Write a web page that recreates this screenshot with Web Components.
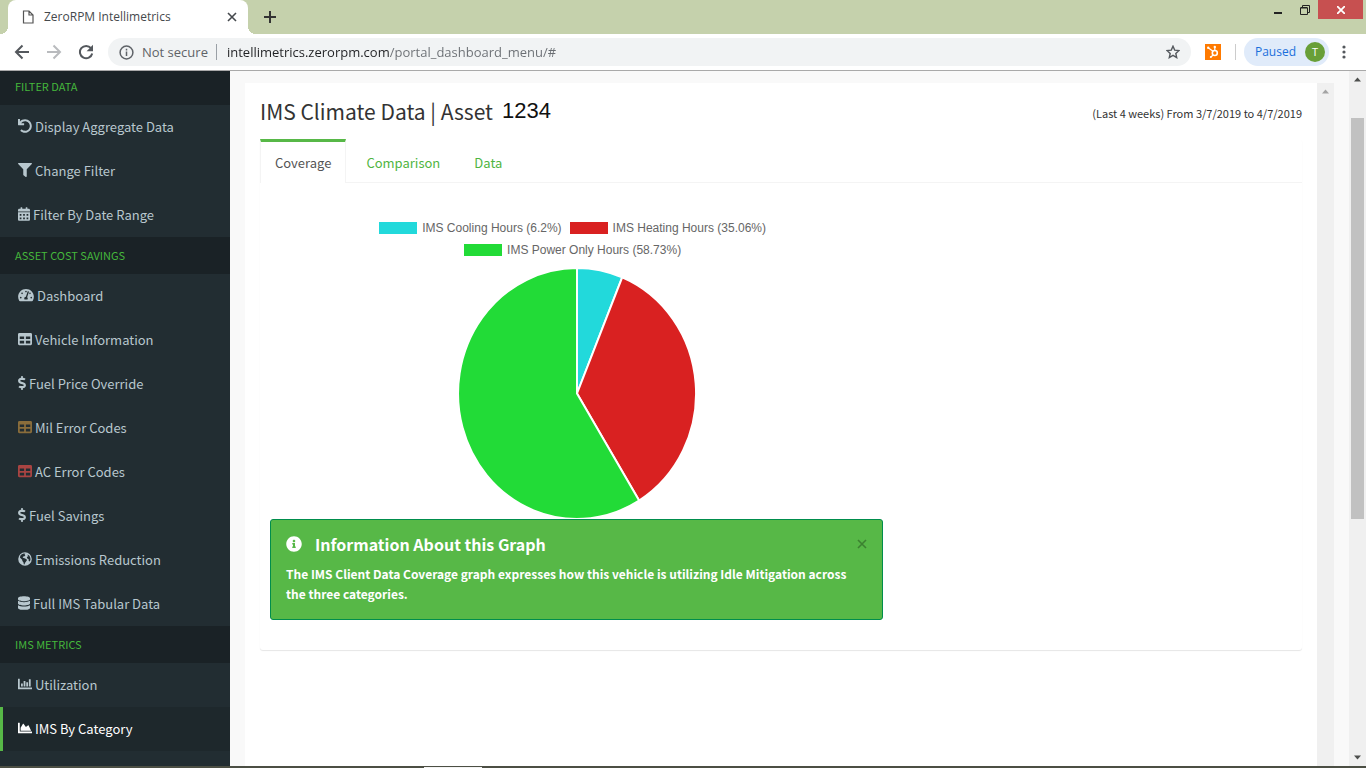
<!DOCTYPE html>
<html lang="en">
<head>
<meta charset="utf-8">
<title>ZeroRPM Intellimetrics</title>
<style>
  html, body { margin: 0; height: 100%; }
  body {
    --green: #57b847;
    --ui: "Open Sans", "Noto Sans", sans-serif;
    --text: "Noto Sans CJK SC", "Noto Sans", sans-serif;
    overflow: hidden;
    font-family: var(--text);
    font-size: 13px;
    color: #333;
  }
</style>
</head>
<body>
<app-window>
  <tab-strip slot="tabs">ZeroRPM Intellimetrics</tab-strip>
  <address-bar slot="toolbar"></address-bar>
  <side-nav slot="nav">
    <nav-group heading="Filter Data">
      <nav-item icon="undo">Display Aggregate Data</nav-item>
      <nav-item icon="filter">Change Filter</nav-item>
      <nav-item icon="calendar">Filter By Date Range</nav-item>
    </nav-group>
    <nav-group heading="Asset Cost Savings">
      <nav-item icon="gauge">Dashboard</nav-item>
      <nav-item icon="table">Vehicle Information</nav-item>
      <nav-item icon="dollar">Fuel Price Override</nav-item>
      <nav-item icon="table" tint="#8a6d3b">Mil Error Codes</nav-item>
      <nav-item icon="table" tint="#a94442">AC Error Codes</nav-item>
      <nav-item icon="dollar">Fuel Savings</nav-item>
      <nav-item icon="globe">Emissions Reduction</nav-item>
      <nav-item icon="database">Full IMS Tabular Data</nav-item>
    </nav-group>
    <nav-group heading="IMS Metrics">
      <nav-item icon="bars">Utilization</nav-item>
      <nav-item icon="area" active>IMS By Category</nav-item>
    </nav-group>
  </side-nav>
  <asset-report>
    <report-title slot="title" asset="1234" period="(Last 4 weeks) From 3/7/2019 to 4/7/2019">IMS Climate Data | Asset</report-title>
    <tab-panel>
      <pie-chart></pie-chart>
      <info-alert heading="Information About this Graph">The IMS Client Data Coverage graph expresses how this vehicle is utilizing Idle Mitigation across the three categories.</info-alert>
    </tab-panel>
  </asset-report>
</app-window>

<script>
const ICONS = {
  undo: [512, '<path d="M212.333 224.333H12c-6.627 0-12-5.373-12-12V12C0 5.373 5.373 0 12 0h48c6.627 0 12 5.373 12 12v78.112C117.773 39.279 184.26 7.47 258.175 8.007c136.906.994 246.448 111.623 246.157 248.532C504.041 393.258 393.12 504 256.333 504c-64.089 0-122.496-24.313-166.51-64.215-5.099-4.622-5.334-12.554-.467-17.42l33.967-33.967c4.474-4.474 11.662-4.717 16.401-.525C170.76 415.336 211.58 432 256.333 432c97.268 0 176-78.716 176-176 0-97.267-78.716-176-176-176-58.496 0-110.28 28.476-142.274 72.333h98.274c6.627 0 12 5.373 12 12v48c0 6.627-5.373 12-12 12z"/>'],
  filter: [512, '<path d="M487.976 0H24.028C2.71 0-8.047 25.866 7.058 40.971L192 225.941V432c0 7.831 3.821 15.17 10.237 19.662l80 55.98C298.02 518.69 320 507.493 320 487.98V225.941l184.947-184.97C520.021 25.896 509.338 0 487.976 0z"/>'],
  calendar: [448, '<path fill-rule="evenodd" d="M0 464c0 26.5 21.5 48 48 48h352c26.5 0 48-21.5 48-48V192H0v272zM64 256h64v64H64zM192 256h64v64h-64zM320 256h64v64h-64zM64 384h64v64H64zM192 384h64v64h-64zM320 384h64v64h-64zM400 64h-48V16c0-8.8-7.2-16-16-16h-32c-8.800 0-16 7.200-16 16v48H160V16c0-8.800-7.200-16-16-16h-32c-8.800 0-16 7.200-16 16v48H48C21.500 64 0 85.500 0 112v48h448v-48c0-26.500-21.500-48-48-48z"/>'],
  gauge: [576, '<path d="M288 32C128.940 32 0 160.940 0 320c0 52.800 14.250 102.260 39.060 144.800 5.610 9.620 16.300 15.200 27.440 15.200h443c11.140 0 21.830-5.580 27.440-15.200C561.750 422.260 576 372.800 576 320c0-159.060-128.940-288-288-288zm0 64c14.710 0 26.580 10.130 30.320 23.650-1.110 2.260-2.640 4.230-3.450 6.670l-9.220 27.670c-5.130 3.490-10.970 6.010-17.640 6.010-17.670 0-32-14.330-32-32S270.330 96 288 96zM96 384c-17.670 0-32-14.330-32-32s14.330-32 32-32 32 14.330 32 32-14.330 32-32 32zm48-160c-17.670 0-32-14.330-32-32s14.330-32 32-32 32 14.330 32 32-14.330 32-32 32zm246.770-72.410l-61.330 184C343.130 347.330 352 364.540 352 384c0 11.720-3.380 22.550-8.880 32H232.880c-5.500-9.450-8.880-20.280-8.880-32 0-33.940 26.500-61.430 59.900-63.590l61.340-184.010c4.170-12.560 17.730-19.450 30.360-15.170 12.570 4.190 19.350 17.790 15.170 30.360zm14.660 57.200l15.520-46.550c3.470-1.290 7.130-2.230 11.050-2.230 17.670 0 32 14.330 32 32s-14.330 32-32 32c-11.380-.010-20.890-6.280-26.570-15.220zM480 384c-17.670 0-32-14.330-32-32s14.330-32 32-32 32 14.330 32 32-14.330 32-32 32z"/>'],
  table: [512, '<path fill-rule="evenodd" d="M464 32H48C21.490 32 0 53.490 0 80v352c0 26.510 21.490 48 48 48h416c26.510 0 48-21.490 48-48V80c0-26.510-21.490-48-48-48zM224 416H64v-96h160v96zm0-160H64v-96h160v96zm224 160H288v-96h160v96zm0-160H288v-96h160v96z"/>'],
  dollar: [288, '<path d="M209.200 233.400l-108-31.600C88.700 198.200 80 186.500 80 173.500c0-16.300 13.200-29.500 29.500-29.500h66.300c12.200 0 24.200 3.700 34.200 10.500 6.100 4.100 14.300 3.100 19.500-2l34.800-34c7.100-6.900 6.100-18.400-1.800-24.500C238 74.800 207.400 64.100 176 64V16c0-8.800-7.200-16-16-16h-32c-8.800 0-16 7.200-16 16v48h-2.500C45.800 64-5.400 118.700.5 183.600c4.200 46.100 39.400 83.600 83.800 96.600l102.500 30c12.500 3.700 21.200 15.300 21.200 28.300 0 16.300-13.200 29.500-29.500 29.500h-66.300C100 368 88 364.300 78 357.500c-6.100-4.100-14.300-3.100-19.500 2l-34.800 34c-7.100 6.900-6.100 18.400 1.800 24.500 24.500 19.200 55.100 29.900 86.500 30v48c0 8.800 7.200 16 16 16h32c8.800 0 16-7.200 16-16v-48.200c46.600-.9 90.300-28.600 105.700-72.700 21.500-61.600-14.600-124.800-72.500-141.700z"/>'],
  globe: [512, '<path fill-rule="evenodd" d="M256 8a248 248 0 1 0 0 496 248 248 0 0 0 0-496zM90 130l50-46 70-28 60 8-30 36 30 22-34 34-44 12-22 40 44 8 44 20 54 28 16 38-34 44-34 48-24 62-24-8-10-66-42-50-8-48-38-34-44-48zM346 90l60 40 36 54 16 80-16 64-30 22-24-36 4-46-40-20-28-34 10-44 44-16-26-32z"/>'],
  database: [448, '<path d="M448 73.143v45.714C448 159.143 347.667 192 224 192S0 159.143 0 118.857V73.143C0 32.857 100.333 0 224 0s224 32.857 224 73.143zM448 176v102.857C448 319.143 347.667 352 224 352S0 319.143 0 278.857V176c48.125 33.143 136.208 48.572 224 48.572S399.874 209.143 448 176zm0 160v102.857C448 479.143 347.667 512 224 512S0 479.143 0 438.857V336c48.125 33.143 136.208 48.572 224 48.572S399.874 369.143 448 336z"/>'],
  bars: [512, '<path d="M500 384c7 0 12 5 12 12v40c0 7-5 12-12 12H12c-7 0-12-5-12-12V76c0-7 5-12 12-12h40c7 0 12 5 12 12v308zM110 240h66v110h-66zM206 144h66v206h-66zM302 192h66v158h-66zM398 80h66v270h-66z"/>'],
  area: [512, '<path d="M500 384c6.600 0 12 5.400 12 12v40c0 6.600-5.400 12-12 12H12c-6.600 0-12-5.400-12-12V76c0-6.600 5.400-12 12-12h40c6.600 0 12 5.400 12 12v308h436zM372.700 159.500L288 216l-85.300-113.700c-5.100-6.800-15.500-6.300-19.900 1L96 248v104h384l-89.900-187.800c-3.200-6.500-11.400-8.700-17.400-4.700z"/>'],
  info: [512, '<path d="M256 8C119.043 8 8 119.083 8 256c0 136.997 111.043 248 248 248s248-111.003 248-248C504 119.083 392.957 8 256 8zm0 110c23.196 0 42 18.804 42 42s-18.804 42-42 42-42-18.804-42-42 18.804-42 42-42zm56 254c0 6.627-5.373 12-12 12h-88c-6.627 0-12-5.373-12-12v-24c0-6.627 5.373-12 12-12h12v-64h-12c-6.627 0-12-5.373-12-12v-24c0-6.627 5.373-12 12-12h64c6.627 0 12 5.373 12 12v100h12c6.627 0 12 5.373 12 12v24z"/>']
};

function icon(name, size) {
  const [w, body] = ICONS[name];
  return `<svg aria-hidden="true" viewBox="0 0 ${w} 512" width="${Math.round(w * size / 512)}" height="${size}" fill="currentColor">${body}</svg>`;
}

function define(name, render) {
  customElements.define(name, class extends HTMLElement {
    constructor() { super(); this.attachShadow({ mode: 'open' }); }
    connectedCallback() { this.shadowRoot.innerHTML = render(this); }
  });
}

const RESET = `
  *, *::before, *::after { box-sizing: border-box; }
  button, input { margin: 0; padding: 0; border: 0; background: none; font: inherit; color: inherit; }
  svg { display: block; flex: none; }
`;

define('app-window', () => `
  <style>${RESET}
    :host { display: flex; flex-direction: column; height: 100vh; background: #f9f9f9; }
    .body { display: flex; flex: 1; min-height: 0; border-top: 1px solid #a9a9a9; }
    main { flex: 1; min-width: 0; display: flex; padding: 12px 15px 0; }
    .taskbar { height: 2px; background: #4c4f44; padding: 1px 0 0 424px; }
    .taskbar span { display: block; width: 58px; height: 1px; background: #f4f4f4; }
  </style>
  <slot name="tabs"></slot>
  <slot name="toolbar"></slot>
  <div class="body">
    <slot name="nav"></slot>
    <main><slot></slot></main>
    <scroll-rail thumb></scroll-rail>
  </div>
  <div class="taskbar"><span></span></div>`);

define('tab-strip', () => `
  <style>${RESET}
    :host { display: flex; height: 34px; background: #c5d1ac; font: 12px/34px var(--ui); color: #45494d; padding-left: 8px; }
    .tab { position: relative; display: flex; align-items: center; width: 240px; padding: 0 11px 0 14px; background: #fff; border-radius: 8px 8px 0 0; }
    .tab::before, .tab::after { content: ""; position: absolute; bottom: 0; width: 8px; height: 8px; }
    .tab::before { left: -8px; background: radial-gradient(circle at 0 0, #c5d1ac 8px, #fff 8px); }
    .tab::after { right: -8px; background: radial-gradient(circle at 100% 0, #c5d1ac 8px, #fff 8px); }
    .name { flex: 1; padding-left: 10px; white-space: nowrap; }
    .add { width: 28px; margin-left: 8px; display: grid; place-items: center; }
    .window { display: flex; margin-left: auto; padding-right: 3px; }
    .window button { width: 27px; height: 19px; display: grid; place-items: center; }
    .window .close { width: 45px; background: #c75050; color: #fff; }
  </style>
  <div class="tab">
    <svg width="12" height="14" viewBox="0 0 12 14" fill="none" stroke="#555" stroke-width="1.200"><path d="M1.500 1h5.500l4 4v8h-9.500zM7 1v4h4"/></svg>
    <span class="name"><slot></slot></span>
    <button aria-label="Close tab"><svg width="10" height="10" viewBox="0 0 10 10" stroke="#45494d" stroke-width="1.600"><path d="M1 1l8 8M9 1l-8 8"/></svg></button>
  </div>
  <button class="add" aria-label="New tab"><svg width="12" height="12" viewBox="0 0 12 12" stroke="#333" stroke-width="2"><path d="M6 0v12M0 6h12"/></svg></button>
  <div class="window">
    <button aria-label="Minimize"><svg width="8" height="10" viewBox="0 0 8 10"><path d="M0 7h8v2H0z" fill="#222"/></svg></button>
    <button aria-label="Restore"><svg width="10" height="10" viewBox="0 0 10 10" fill="none" stroke="#222"><path d="M.5 3h7v6.500h-7zM.5 2.500h7M2.500 2V.5h7v7H8"/></svg></button>
    <button class="close" aria-label="Close"><svg width="8" height="8" viewBox="0 0 8 8" stroke="#fff" stroke-width="1.800"><path d="M0 0l8 8M8 0L0 8"/></svg></button>
  </div>`);

define('address-bar', () => `
  <style>${RESET}
    :host { display: flex; align-items: center; height: 36px; padding: 0 17px 0 14px; background: #fff; font: 13px/28px var(--ui); color: #5f6368; }
    .nav { display: flex; gap: 16px; margin-right: 14px; }
    .box { display: flex; align-items: center; flex: 1; height: 28px; padding: 0 11px; border-radius: 14px; background: #f1f3f4; }
    label { padding: 0 8px; white-space: nowrap; }
    .rule { width: 1px; height: 16px; background: #9aa0a6; }
    input { flex: 1; min-width: 0; height: 28px; margin-left: 10px; outline: 0; color: #202124;
      -webkit-text-fill-color: transparent;
      background: linear-gradient(90deg, #202124 163px, #6a6e73 163px); -webkit-background-clip: text; background-clip: text; }
    .hub { margin: 0 14px; }
    .split { width: 1px; height: 16px; background: #ccc; }
    .profile { display: flex; align-items: center; gap: 9px; height: 28px; margin-left: 8px; padding: 0 4px 0 11px; border-radius: 14px; background: #e0ebfa; color: #1a6fdc; font-size: 12px; }
    .avatar { width: 20px; border-radius: 50%; background: #689f38; color: #fff; font-size: 11px; line-height: 20px; text-align: center; }
    .menu { margin-left: 10px; }
  </style>
  <div class="nav">
    <button aria-label="Back"><svg width="16" height="16" viewBox="0 0 16 16" fill="none" stroke="#54585d" stroke-width="2"><path d="M15 8H2.500M8.500 1.500L2 8l6.500 6.500"/></svg></button>
    <button aria-label="Forward"><svg width="16" height="16" viewBox="0 0 16 16" fill="none" stroke="#b9bbbe" stroke-width="2"><path d="M1 8h12.500M7.500 1.500L14 8l-6.500 6.500"/></svg></button>
    <button aria-label="Reload"><svg width="16" height="16" viewBox="0 0 16 16"><path d="M13 4.200A6.200 6.200 0 1 0 14.200 9.500" fill="none" stroke="#54585d" stroke-width="2"/><path d="M15 .8v6.400H8.600z" fill="#54585d"/></svg></button>
  </div>
  <div class="box">
    <svg width="15" height="15" viewBox="0 0 15 15" fill="none" stroke="#5f6368" stroke-width="1.500"><circle cx="7.500" cy="7.500" r="6.400"/><path d="M7.500 6.600v4.400M7.500 3.800v1.700"/></svg>
    <label for="url">Not secure</label>
    <span class="rule"></span>
    <input id="url" type="text" spellcheck="false" value="intellimetrics.zerorpm.com/portal_dashboard_menu/#">
    <button aria-label="Bookmark this page"><svg width="14" height="14" viewBox="0 0 14 14" fill="none" stroke="#54585d" stroke-width="1.400"><path d="M7 1.200l1.700 3.900 4.300.4-3.200 2.900.9 4.200L7 10.400l-3.700 2.200.9-4.200L1 5.500l4.300-.4z"/></svg></button>
  </div>
  <button class="hub" aria-label="HubSpot extension"><svg width="16" height="16" viewBox="0 0 16 16"><path fill="#ff7a00" d="M0 0h16v16H0z"/><g fill="none" stroke="#fff"><circle cx="9.800" cy="9" r="2.500" stroke-width="1.600"/><path d="M9.800 6.500V3.500M8 7.300L3.500 4M8 11l-2 2" stroke-width="1.200"/></g><g fill="#fff"><circle cx="9.800" cy="3" r="1.200"/><circle cx="3.200" cy="3.800" r="1.200"/><circle cx="5.800" cy="13" r="1"/></g></svg></button>
  <span class="split"></span>
  <button class="profile">Paused <span class="avatar">T</span></button>
  <button class="menu" aria-label="Menu"><svg width="10" height="14" viewBox="0 0 10 14" fill="#54585d"><circle cx="5" cy="2" r="1.600"/><circle cx="5" cy="7" r="1.600"/><circle cx="5" cy="12" r="1.600"/></svg></button>`);

define('side-nav', () => `
  <style>
    :host { display: block; flex: none; width: 230px; overflow: hidden; background: #222d32; }
    nav { margin-top: -3px; }
  </style>
  <nav><slot></slot></nav>`);

define('nav-group', el => `
  <style>
    :host { display: block; }
    h2 { margin: 0; padding: 0 15px; background: #1a2226; color: #45b73c; font-weight: 400; font-size: 11px; line-height: 37px; text-transform: uppercase; }
  </style>
  <h2>${el.getAttribute('heading')}</h2>
  <slot></slot>`);

define('nav-item', el => `
  <style>${RESET}
    :host { display: block; color: #b8c7ce; }
    a { display: flex; align-items: center; gap: 3px; height: 44px; padding: 0 15px 2px; border-left: 3px solid transparent; color: inherit; text-decoration: none; white-space: nowrap; }
    :host([active]) { color: #fff; }
    :host([active]) a { background: #1e282c; border-color: var(--green); }
    .icon { color: ${el.getAttribute('tint') || 'inherit'}; }
  </style>
  <a href="#"><span class="icon">${icon(el.getAttribute('icon'), 14)}</span><span><slot></slot></span></a>`);

define('scroll-rail', el => `
  <style>${RESET}
    :host { display: flex; flex: none; flex-direction: column; align-items: center; width: 17px; padding: 6px 0; background: #f0f0f0; color: #4d4f4d; }
    :host([idle]) { color: #a3a3a3; }
    .track { flex: 1; width: 13px; padding: 36px 0 0; }
    .thumb { height: 63%; background: #c1c1c1; }
  </style>
  <svg width="7" height="5" viewBox="0 0 7 5"><path d="M0 4.500L3.500 .5 7 4.500z" fill="currentColor"/></svg>
  <div class="track">${el.hasAttribute('thumb') ? '<div class="thumb"></div>' : ''}</div>
  ${el.hasAttribute('thumb') ? '<svg width="7" height="5" viewBox="0 0 7 5"><path d="M0 .5L3.500 4.500 7 .5z" fill="currentColor"/></svg>' : ''}`);

define('asset-report', () => `
  <style>
    :host { display: flex; flex: 1; min-width: 0; background: #fff; }
    section { flex: 1; min-width: 0; padding: 13px 15px 0; }
  </style>
  <section><slot name="title"></slot><slot></slot></section>
  <scroll-rail idle></scroll-rail>`);

define('report-title', el => `
  <style>
    :host { display: flex; align-items: center; justify-content: space-between; height: 30px; margin-bottom: 13px; }
    h1 { display: flex; gap: 9px; margin: 0; font-weight: 400; font-size: 21px; line-height: 30px; }
    b { font: 22px/30px "Liberation Sans", sans-serif; color: #111; }
    small { font-size: 11px; line-height: 16px; padding-top: 4px; }
  </style>
  <h1><span><slot></slot></span> <b>${el.getAttribute('asset')}</b></h1>
  <small>${el.getAttribute('period')}</small>`);

define('tab-panel', () => `
  <style>${RESET}
    :host { display: block; border-radius: 3px; box-shadow: 0 1px 1px rgba(0,0,0,.1); }
    .tabs { display: flex; gap: 6px; height: 44px; border-bottom: 1px solid #f4f4f4; }
    button { height: 44px; padding: 3px 14px 0; color: #4fb53f; line-height: 40px; }
    button[aria-selected=true] { padding: 0 14px; border-top: 3px solid var(--green); border-left: 1px solid #f4f4f4; border-right: 1px solid #f4f4f4; background: #fff; color: #555; line-height: 39px; }
    .page { padding: 34px 10px 30px; }
    .column { width: 60%; }
  </style>
  <div class="tabs" role="tablist">
    <button role="tab" aria-selected="true">Coverage</button>
    <button role="tab" aria-selected="false">Comparison</button>
    <button role="tab" aria-selected="false">Data</button>
  </div>
  <div class="page" role="tabpanel"><div class="column"><slot></slot></div></div>`);

const SERIES = [
  { label: 'IMS Cooling Hours', share: 6.2, color: '#22d9db' },
  { label: 'IMS Heating Hours', share: 35.06, color: '#d92121' },
  { label: 'IMS Power Only Hours', share: 58.73, color: '#22db37' }
];

function slices() {
  const cx = 120, cy = 125.5, rx = 119, ry = 125.5;
  const total = SERIES.reduce((sum, s) => sum + s.share, 0);
  const point = t => `${(cx + rx * Math.sin(t)).toFixed(1)} ${(cy - ry * Math.cos(t)).toFixed(1)}`;
  let from = 0;
  return SERIES.map(s => {
    const to = from + 2 * Math.PI * s.share / total;
    const d = `M${cx} ${cy}L${point(from)}A${rx} ${ry} 0 ${to - from > Math.PI ? 1 : 0} 1 ${point(to)}z`;
    from = to;
    return `<path d="${d}" fill="${s.color}"/>`;
  }).join('');
}

define('pie-chart', () => `
  <style>${RESET}
    :host { display: block; font: 12px/22px "Liberation Sans", sans-serif; color: #666; }
    ul { display: flex; flex-wrap: wrap; justify-content: center; width: 400px; max-width: 100%; margin: 0 auto 7px; padding: 0; list-style: none; }
    li { display: flex; align-items: center; gap: 5px; padding-right: 8px; white-space: nowrap; }
    i { width: 38px; height: 12px; }
    svg { margin: 0 auto; }
  </style>
  <ul>${SERIES.map(s => `<li><i style="background:${s.color}"></i>${s.label} (${s.share}%)</li>`).join('')}</ul>
  <svg role="img" aria-label="Coverage by category" width="240" height="251" viewBox="0 0 240 251" stroke="#fff" stroke-width="2" stroke-linejoin="round">${slices()}</svg>`);

define('info-alert', el => `
  <style>${RESET}
    :host { display: block; padding: 15px; border: 1px solid #008d4c; border-radius: 3px; background: var(--green); color: #fff; }
    header { display: flex; align-items: center; height: 18px; margin-bottom: 11px; }
    h4 { flex: 1; margin: 0 0 0 13px; font-size: 16px; line-height: 18px; font-weight: 700; }
    p { margin: 0; padding-right: 12px; font-size: 12px; font-weight: 700; line-height: 20px; }
    button { color: #3c8131; }
  </style>
  <header>${icon('info', 16)}<h4>${el.getAttribute('heading')}</h4>
    <button aria-label="Dismiss"><svg width="10" height="10" viewBox="0 0 10 10" stroke="currentColor" stroke-width="1.600"><path d="M1 1l8 8M9 1L1 9"/></svg></button></header>
  <p><slot></slot></p>`);
</script>
</body>
</html>
